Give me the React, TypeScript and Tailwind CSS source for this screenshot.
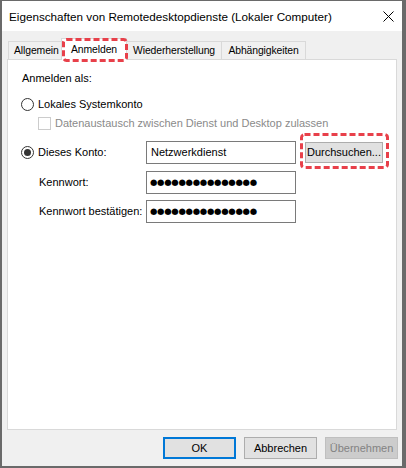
import React from "react";

const Radio = ({ checked }: { checked?: boolean }) => (
  <span className="w-[13px] h-[13px] rounded-full border border-[#333333] bg-white flex items-center justify-center shrink-0">
    {checked && <span className="w-[7px] h-[7px] rounded-full bg-[#333333]" />}
  </span>
);

const Dashed = ({ w, h }: { w: number; h: number }) => (
  <svg width={w} height={h} className="absolute pointer-events-none" style={{ left: 0, top: 0 }}>
    <rect
      x={1.5}
      y={1.5}
      width={w - 3}
      height={h - 3}
      rx={3}
      fill="none"
      stroke="#e8404a"
      strokeWidth={3}
      strokeDasharray="6 3"
    />
  </svg>
);

const Dots = () => (
  <span
    className="text-[8.5px] tracking-[-0.3px] leading-none"
    style={{ fontFamily: '"DejaVu Sans", sans-serif' }}
  >
    ●●●●●●●●●●●●●●●
  </span>
);

export default function App() {
  return (
    <div
      className="w-[406px] h-[468px] bg-[#6a6a6a] overflow-hidden text-[11px] text-black whitespace-nowrap"
      style={{ fontFamily: '"Liberation Sans", Arial, sans-serif' }}
    >
      <div className="ml-[2px] mt-[1px] w-[400px] h-[465px] bg-[#f0f0f0] flex flex-col">
        {/* title bar */}
        <div className="h-[30px] bg-white flex items-center justify-between pl-[7px] pr-[7px]">
          <span className="text-[11.7px] pt-[1px]">Eigenschaften von Remotedesktopdienste (Lokaler Computer)</span>
          <svg width="11" height="11" viewBox="0 0 11 11" className="mr-[1px]">
            <path d="M0.5 0.5 L10.5 10.5 M10.5 0.5 L0.5 10.5" stroke="#000" strokeWidth="1" />
          </svg>
        </div>
        {/* body */}
        <div className="flex-1 flex flex-col px-[5px] pt-[7px]">
          {/* tabs */}
          <div className="flex items-end h-[21px] pl-[1px] relative z-10 text-[10.4px] tracking-[-0.1px]">
            <div className="w-[53px] h-[18px] border-l border-t border-[#d9d9d9] bg-[#f0f0f0] flex items-center pl-[5px] pt-[1px]">
              Allgemein
            </div>
            <div className="relative w-[66px] h-[22px] -mb-[1px] border-l border-t border-r border-[#d9d9d9] bg-white flex items-center justify-center">
              Anmelden
              <div className="absolute" style={{ left: 0, top: -1 }}>
                <Dashed w={66} h={24} />
              </div>
            </div>
            <div className="w-[94px] h-[18px] border-t border-[#d9d9d9] bg-[#f0f0f0] flex items-center justify-center pt-[1px]">
              Wiederherstellung
            </div>
            <div className="w-[85px] h-[18px] border-l border-t border-r border-[#d9d9d9] bg-[#f0f0f0] flex items-center justify-center pt-[1px]">
              Abhängigkeiten
            </div>
          </div>
          {/* panel */}
          <div className="flex-1 bg-white border border-[#d9d9d9] flex flex-col pl-[13px] pt-[11px]">
            <div className="h-[14px] leading-[14px] ml-[1px]">Anmelden als:</div>
            <div className="mt-[13px] h-[13px] flex items-center gap-[4px]">
              <Radio />
              <span className="leading-[13px]">Lokales Systemkonto</span>
            </div>
            <div className="mt-[6px] h-[13px] flex items-center gap-[4px] pl-[17px]">
              <span className="w-[13px] h-[13px] border border-[#cccccc] bg-white shrink-0" />
              <span className="leading-[13px] text-[#8a8a8a]">Datenaustausch zwischen Dienst und Desktop zulassen</span>
            </div>
            <div className="mt-[11px] h-[23px] flex items-center">
              <div className="w-[125px] flex items-center gap-[4px]">
                <Radio checked />
                <span>Dieses Konto:</span>
              </div>
              <div className="w-[150px] h-[23px] border border-[#7a7a7a] flex items-center pl-[4px]">Netzwerkdienst</div>
              <div className="relative ml-[9px] self-start mt-[1px]">
                <div className="w-[78px] h-[21px] bg-[#e1e1e1] border border-[#adadad] flex items-center justify-center">
                  Durchsuchen...
                </div>
                <div className="absolute" style={{ left: -5, top: -9 }}>
                  <Dashed w={89} h={36} />
                </div>
              </div>
            </div>
            <div className="mt-[7px] h-[23px] flex items-center">
              <div className="w-[125px] pl-[18px]">Kennwort:</div>
              <div className="w-[150px] h-[23px] border border-[#7a7a7a] flex items-center pl-[3px]">
                <Dots />
              </div>
            </div>
            <div className="mt-[6px] h-[23px] flex items-center">
              <div className="w-[125px] pl-[18px]">Kennwort bestätigen:</div>
              <div className="w-[150px] h-[23px] border border-[#7a7a7a] flex items-center pl-[3px]">
                <Dots />
              </div>
            </div>
          </div>
        </div>
        {/* footer */}
        <div className="h-[36px] flex items-center justify-end gap-[8px] pr-[4px]">
          <div className="w-[73px] h-[22px] bg-[#e1e1e1] border-2 border-[#0078d7] flex items-center justify-center">OK</div>
          <div className="w-[73px] h-[22px] bg-[#e1e1e1] border border-[#adadad] flex items-center justify-center">Abbrechen</div>
          <div className="w-[73px] h-[22px] bg-[#cccccc] border border-[#bfbfbf] flex items-center justify-center text-[#838383]">
            Übernehmen
          </div>
        </div>
      </div>
    </div>
  );
}
